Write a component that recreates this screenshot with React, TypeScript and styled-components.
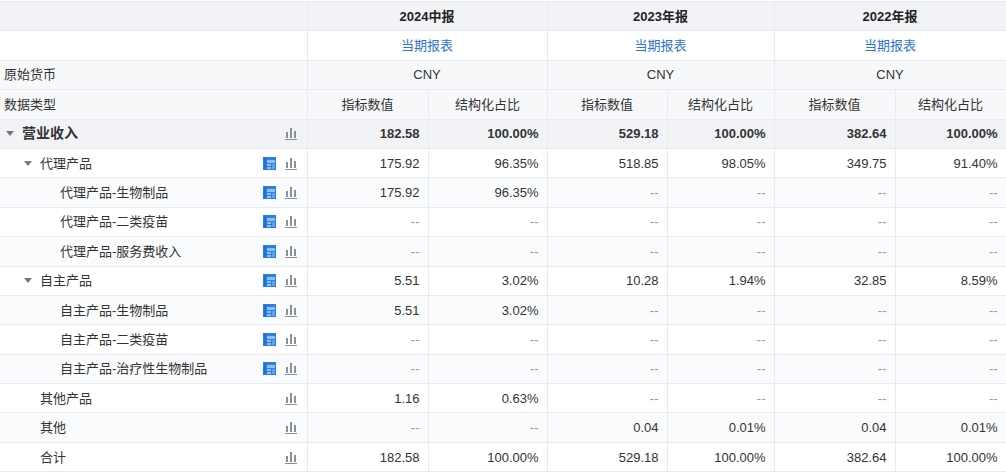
import styled, { createGlobalStyle } from "styled-components";

const Global = createGlobalStyle`
  body { margin: 0; background: #fff; font-family: "Liberation Sans", "Noto Sans CJK SC", sans-serif; }
`;

const Table = styled.table`
  border-collapse: collapse;
  table-layout: fixed;
  width: 1006px;
  margin-top: 1px;
  font-size: 13px;
  color: #333;
  col.label { width: 307px; }
`;

const Row = styled.tr<{ $bg?: string }>`
  height: 29.4px;
  background: ${(p) => p.$bg || "#fff"};
`;

const Cell = styled.td<{ $align?: string; $bold?: boolean; $color?: string }>`
  border: 1px solid #e8eaef;
  border-left: none;
  padding: 0 8px;
  text-align: ${(p) => p.$align || "right"};
  font-weight: ${(p) => (p.$bold ? 700 : 400)};
  color: ${(p) => p.$color || "#333"};
  white-space: nowrap;
  line-height: 27px;
`;

const Label = styled.div<{ $indent: number }>`
  display: flex;
  align-items: center;
  padding-left: ${(p) => p.$indent}px;
`;

const Caret = styled.span`
  width: 0;
  height: 0;
  border-left: 4px solid transparent;
  border-right: 4px solid transparent;
  border-top: 5px solid #777;
  margin-right: 8px;
`;

const Name = styled.span<{ $bold?: boolean }>`
  flex: 1;
  font-weight: ${(p) => (p.$bold ? 700 : 400)};
  font-size: ${(p) => (p.$bold ? "14px" : "13px")};
`;

const Icons = styled.span`
  display: flex;
  gap: 9px;
  align-items: center;
  margin-right: 2px;
`;

const TableIcon = () => (
  <svg width="13" height="13" viewBox="0 0 13 13">
    <rect x="0" y="0" width="13" height="13" fill="#2b7de9" />
    <rect x="4" y="3" width="8" height="3" fill="#8fc0f5" />
    <rect x="4" y="7" width="4" height="2" fill="#8fc0f5" />
    <rect x="4" y="10" width="4" height="2" fill="#8fc0f5" />
    <rect x="9" y="7" width="3" height="5" fill="#5da3f0" />
    <rect x="1" y="1" width="2" height="11" fill="#1f6fd8" />
  </svg>
);

const ChartIcon = () => (
  <svg width="12" height="13" viewBox="0 0 12 13" fill="#8b8f99">
    <rect x="1" y="5" width="2" height="6" />
    <rect x="5" y="1" width="2" height="10" />
    <rect x="9" y="4" width="2" height="7" />
    <rect x="0" y="12" width="12" height="1" />
  </svg>
);

type R = { name: string; indent: number; caret?: boolean; bold?: boolean; table?: boolean; vals: string[] };

const d = "--";
const rows: R[] = [
  { name: "营业收入", indent: 6, caret: true, bold: true, vals: ["182.58", "100.00%", "529.18", "100.00%", "382.64", "100.00%"] },
  { name: "代理产品", indent: 24, caret: true, table: true, vals: ["175.92", "96.35%", "518.85", "98.05%", "349.75", "91.40%"] },
  { name: "代理产品-生物制品", indent: 60, table: true, vals: ["175.92", "96.35%", d, d, d, d] },
  { name: "代理产品-二类疫苗", indent: 60, table: true, vals: [d, d, d, d, d, d] },
  { name: "代理产品-服务费收入", indent: 60, table: true, vals: [d, d, d, d, d, d] },
  { name: "自主产品", indent: 24, caret: true, table: true, vals: ["5.51", "3.02%", "10.28", "1.94%", "32.85", "8.59%"] },
  { name: "自主产品-生物制品", indent: 60, table: true, vals: ["5.51", "3.02%", d, d, d, d] },
  { name: "自主产品-二类疫苗", indent: 60, table: true, vals: [d, d, d, d, d, d] },
  { name: "自主产品-治疗性生物制品", indent: 60, table: true, vals: [d, d, d, d, d, d] },
  { name: "其他产品", indent: 40, vals: ["1.16", "0.63%", d, d, d, d] },
  { name: "其他", indent: 40, vals: [d, d, "0.04", "0.01%", "0.04", "0.01%"] },
  { name: "合计", indent: 40, vals: ["182.58", "100.00%", "529.18", "100.00%", "382.64", "100.00%"] },
];

const periods = ["2024中报", "2023年报", "2022年报"];

export default function App() {
  return (
    <>
      <Global />
      <Table>
        <colgroup>
          <col className="label" />
          <col style={{ width: 121 }} />
          <col style={{ width: 119 }} />
          <col style={{ width: 120 }} />
          <col style={{ width: 107 }} />
          <col style={{ width: 121 }} />
          <col style={{ width: 111 }} />
        </colgroup>
        <tbody>
          <Row $bg="#f2f3f6">
            <Cell />
            {periods.map((p) => (
              <Cell key={p} colSpan={2} $align="center" $bold $color="#222">{p}</Cell>
            ))}
          </Row>
          <Row>
            <Cell />
            {periods.map((p) => (
              <Cell key={p} colSpan={2} $align="center" $color="#2f73d9">当期报表</Cell>
            ))}
          </Row>
          <Row $bg="#f7f8fa">
            <Cell $align="left" style={{ paddingLeft: 4 }}>原始货币</Cell>
            {periods.map((p) => (
              <Cell key={p} colSpan={2} $align="center">CNY</Cell>
            ))}
          </Row>
          <Row $bg="#f7f8fa">
            <Cell $align="left" style={{ paddingLeft: 4 }}>数据类型</Cell>
            {periods.map((p) => [
              <Cell key={p + "a"} $align="center">指标数值</Cell>,
              <Cell key={p + "b"} $align="center">结构化占比</Cell>,
            ])}
          </Row>
          {rows.map((r, i) => (
            <Row key={r.name} $bg={i === 0 ? "#f2f3f6" : i % 2 === 0 ? "#fafbfc" : "#fff"}>
              <Cell $align="left" style={{ paddingLeft: 0 }}>
                <Label $indent={r.indent}>
                  {r.caret && <Caret />}
                  <Name $bold={r.bold}>{r.name}</Name>
                  <Icons>
                    {r.table && <TableIcon />}
                    <ChartIcon />
                  </Icons>
                </Label>
              </Cell>
              {r.vals.map((v, j) => (
                <Cell key={j} $bold={r.bold} $color={v === d ? "#999" : "#333"}>{v}</Cell>
              ))}
            </Row>
          ))}
        </tbody>
      </Table>
    </>
  );
}
